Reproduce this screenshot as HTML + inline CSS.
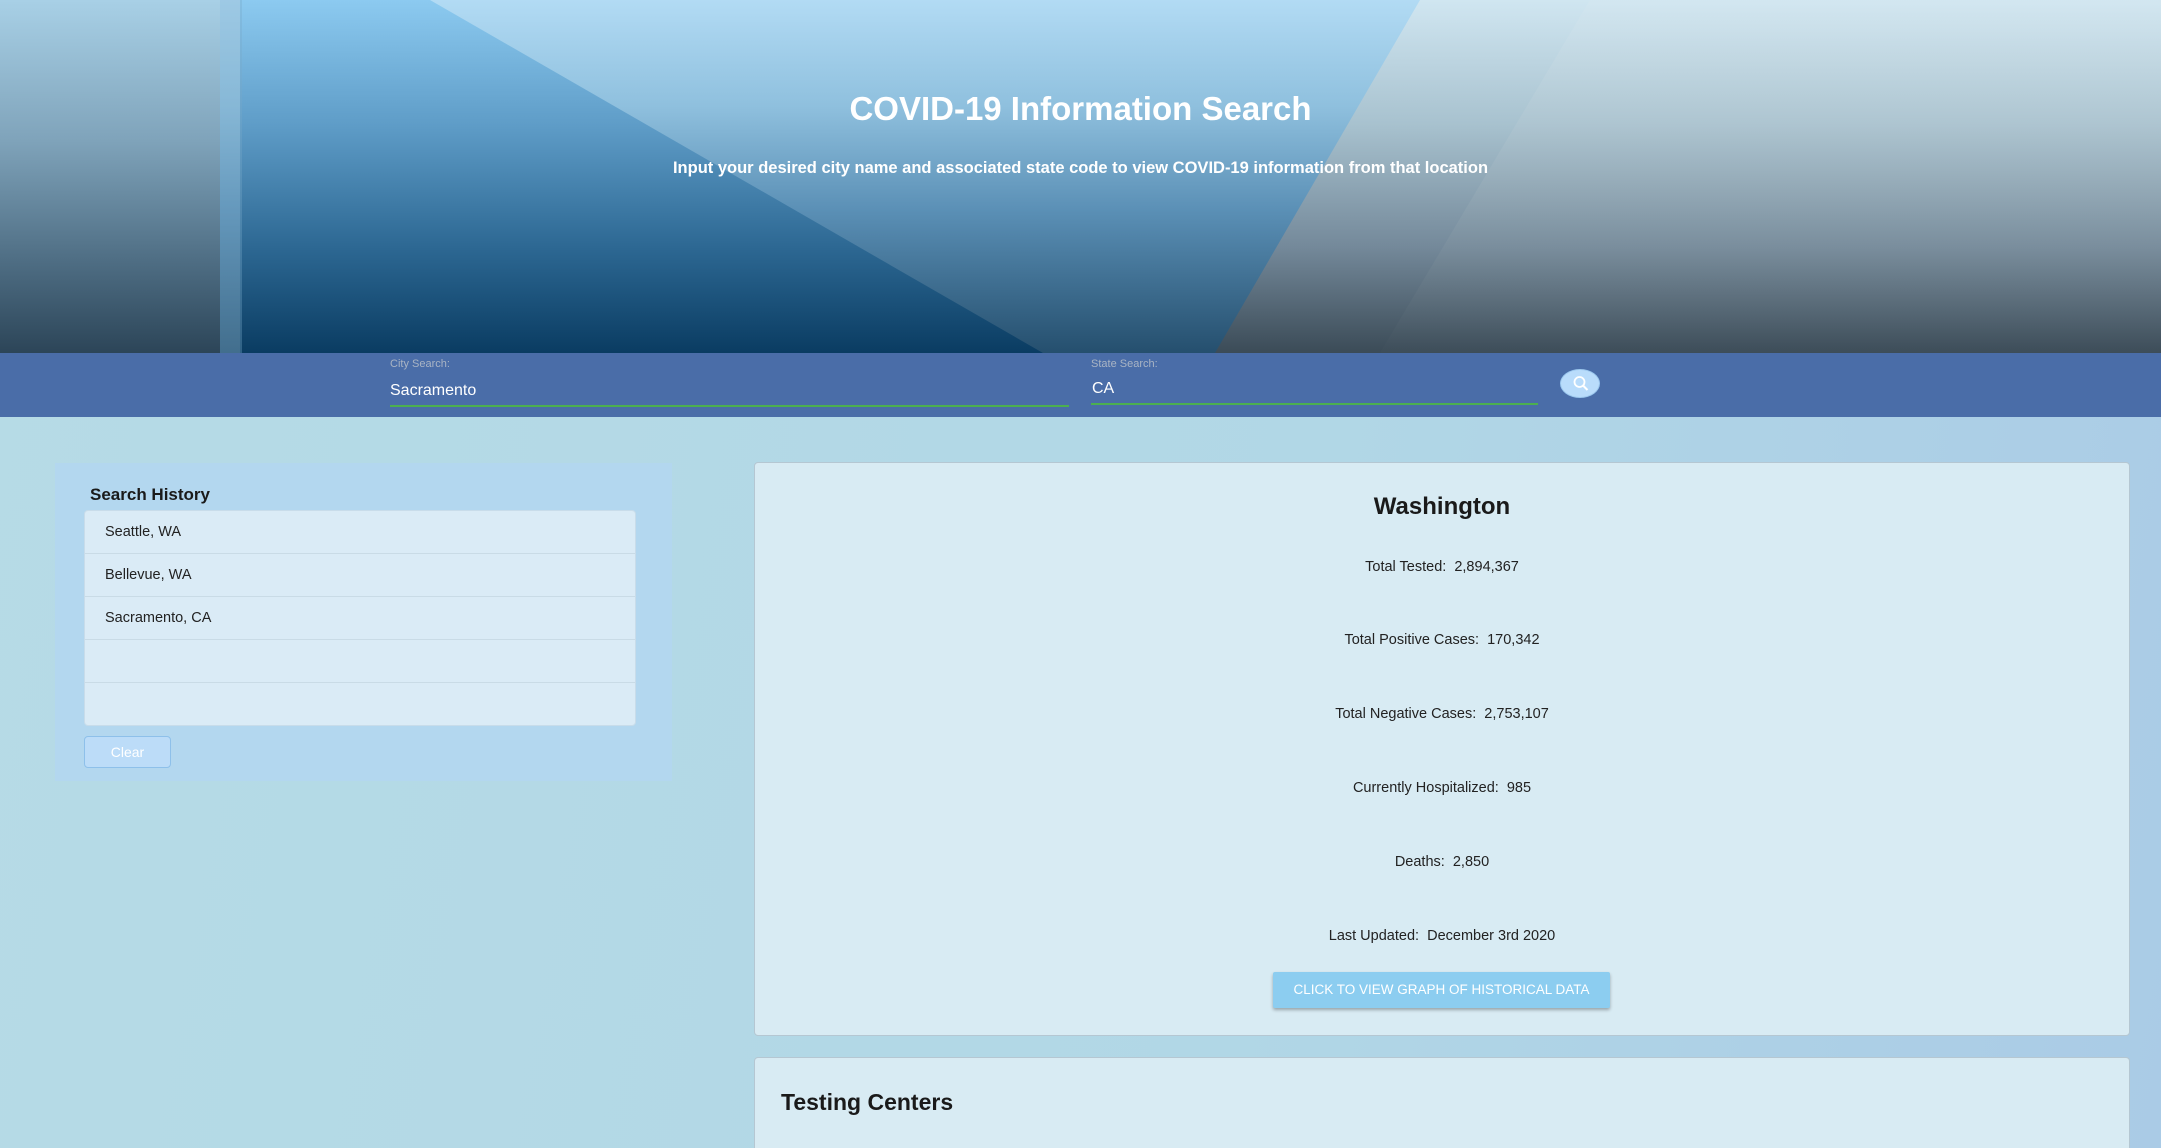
<!DOCTYPE html>
<html style="overflow:hidden;height:1148px"><head><meta charset="utf-8"><style>
*{margin:0;padding:0;box-sizing:border-box}
body{width:2161px;height:1148px;overflow:hidden;font-family:"Liberation Sans",sans-serif;background:linear-gradient(100deg,#b6dbe6 0%,#b1d7e6 60%,#aacbe6 100%);position:relative}
.abs{position:absolute}
#hdr{left:0;top:0;width:2161px;height:353px;overflow:hidden;background:linear-gradient(180deg,#d0e6f1 0%,#a8c2cf 35%,#74899a 70%,#3b4b57 100%)}
#hdr .l{left:0;top:0;width:240px;height:353px;background:linear-gradient(180deg,#a8d0e6 0%,#7fa3ba 40%,#4d6c82 75%,#2c4558 100%)}
#hdr .b{left:0;top:0;width:2161px;height:353px;background:linear-gradient(180deg,#b2dbf4 0%,#8fc0de 30%,#5a8fb5 60%,#254f6e 100%);clip-path:polygon(220px 0,1420px 0,1215px 353px,220px 353px)}
#hdr .d{left:0;top:0;width:2161px;height:353px;background:linear-gradient(180deg,#8ccaf0 0%,#5f9dc8 35%,#2d6893 70%,#0a3c62 100%);clip-path:polygon(240px 0,430px 0,1043px 353px,240px 353px)}
#hdr .s{left:220px;top:0;width:22px;height:353px;background:rgba(120,170,200,.35)}
#hdr .r{left:0;top:0;width:2161px;height:353px;background:linear-gradient(180deg,rgba(215,232,240,.35),rgba(70,85,95,.15));clip-path:polygon(1590px 0,2161px 0,2161px 353px,1380px 353px)}
h1{left:0;width:2161px;top:90px;text-align:center;color:#fff;font-size:33px;font-weight:bold}
.sub{left:0;width:2161px;top:159px;text-align:center;color:#fff;font-size:16.5px;font-weight:bold}
#bar{left:0;top:353px;width:2161px;height:64px;background:#4a6da8}
.lbl{font-size:11px;color:#a9b4c4}
.val{font-size:16px;color:#fff}
.ul{height:2px;background:#4caf50}
#sbtn{left:1560px;top:369px;width:40px;height:29px;border-radius:50%;background:#b9dcfb;border:1px solid #9cc8ee}
#left{left:55px;top:463px;width:617px;height:318px;background:#b3d7ef}
#left h3{position:absolute;left:35px;top:22px;font-size:17px;color:#1a1a1a}
#list{left:84px;top:510px;width:552px;height:216px;background:#daebf6;border:1px solid #c8dcea;border-radius:4px}
#list div{height:43px;border-bottom:1px solid #c9dbe6;padding-left:20px;line-height:42px;font-size:14.5px;color:#222}
#list div:last-child{border-bottom:none}
#clear{left:84px;top:736px;width:87px;height:32px;background:#bcdcf8;border:1px solid #8ec0ea;border-radius:4px;color:#fff;font-size:14px;text-align:center;line-height:30px}
.card{background:#d8ebf3;border:1px solid #b5c7d2;border-radius:4px}
#c1{left:754px;top:462px;width:1376px;height:574px}
#c1 h2{position:absolute;left:0;width:100%;text-align:center;top:30px;font-size:24px;color:#1a1a1a}
.st{position:absolute;left:0;width:100%;text-align:center;font-size:14.5px;color:#222}
#gbtn{left:1273px;top:972px;width:337px;height:36px;background:#8ccdf0;color:#fff;font-size:13.5px;text-align:center;line-height:36px;box-shadow:0 2px 3px rgba(0,0,0,.3);border-radius:2px}
#c2{left:754px;top:1057px;width:1376px;height:91px;border-bottom:none;border-radius:4px 4px 0 0}
#c2 h2{position:absolute;left:26px;top:31px;font-size:23px;color:#1a1a1a}
</style></head><body>
<div id="hdr" class="abs">
 <div class="abs l"></div><div class="abs r"></div><div class="abs b"></div><div class="abs d"></div><div class="abs s"></div>
</div>
<h1 class="abs">COVID-19 Information Search</h1>
<div class="abs sub">Input your desired city name and associated state code to view COVID-19 information from that location</div>
<div id="bar" class="abs"></div>
<div class="abs lbl" style="left:390px;top:358px">City Search:</div>
<div class="abs val" style="left:390px;top:382px">Sacramento</div>
<div class="abs ul" style="left:390px;top:405px;width:679px"></div>
<div class="abs lbl" style="left:1091px;top:358px">State Search:</div>
<div class="abs val" style="left:1092px;top:380px">CA</div>
<div class="abs ul" style="left:1091px;top:403px;width:447px"></div>
<div id="sbtn" class="abs"><svg width="40" height="29" viewBox="0 0 40 29"><circle cx="18.5" cy="12" r="5" fill="none" stroke="#fff" stroke-width="1.8"/><path d="M22 15.5 L26.5 20" stroke="#fff" stroke-width="2"/></svg></div>
<div id="left" class="abs"><h3>Search History</h3></div>
<div id="list" class="abs"><div>Seattle, WA</div><div>Bellevue, WA</div><div>Sacramento, CA</div><div></div><div></div></div>
<div id="clear" class="abs">Clear</div>
<div id="c1" class="abs card">
 <h2>Washington</h2>
 <div class="st" style="top:96px">Total Tested:&nbsp; 2,894,367</div>
 <div class="st" style="top:169px">Total Positive Cases:&nbsp; 170,342</div>
 <div class="st" style="top:243px">Total Negative Cases:&nbsp; 2,753,107</div>
 <div class="st" style="top:317px">Currently Hospitalized:&nbsp; 985</div>
 <div class="st" style="top:391px">Deaths:&nbsp; 2,850</div>
 <div class="st" style="top:465px">Last Updated:&nbsp; December 3rd 2020</div>
</div>
<div id="gbtn" class="abs">CLICK TO VIEW GRAPH OF HISTORICAL DATA</div>
<div id="c2" class="abs card"><h2>Testing Centers</h2></div>
</body></html>
